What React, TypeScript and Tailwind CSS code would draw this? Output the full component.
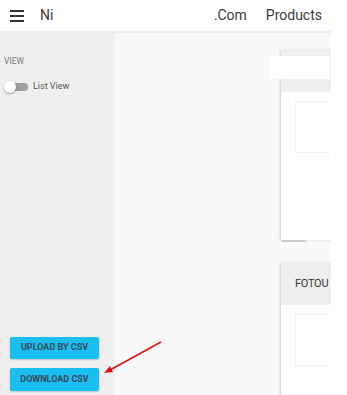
import React from 'react';

const font = { fontFamily: 'Roboto, "Liberation Sans", sans-serif' };

const Card: React.FC<{ title?: string; search?: boolean; bodyH: string }> = ({ title, search, bodyH }) => (
  <div className="relative w-[70px] bg-white shadow-[-1px_0_2px_rgba(0,0,0,0.18)]">
    <div className="h-[42px] bg-[#efefef] flex items-center pl-[14px]">
      {title && <span className="text-[11px] text-[#333] tracking-tight">{title}</span>}
    </div>
    {search && <div className="absolute left-[-10px] top-[6px] w-[59px] h-[23px] bg-white" />}
    <div className={`${bodyH} pt-[9px] pl-[14px]`}>
      <div className="w-[60px] h-[52px] border border-[#f2f2f2] border-r-0" />
    </div>
  </div>
);

const App: React.FC = () => {
  return (
    <div className="w-[347px] h-[395px] bg-white relative overflow-hidden" style={font}>
      <div className="w-[331px] h-full flex flex-col">
        <header className="h-[33px] shrink-0 flex items-center border-b-2 border-[#ececec] bg-white">
          <div className="ml-[10px] w-[14px] flex flex-col gap-[3px]">
            <span className="h-[2px] bg-[#333]" />
            <span className="h-[2px] bg-[#333]" />
            <span className="h-[2px] bg-[#333]" />
          </div>
          <span className="ml-[16px] text-[14px] text-[#3a3a3a]">Ni</span>
          <span className="ml-auto text-[14px] text-[#3a3a3a]">.Com</span>
          <span className="ml-[19px] mr-[9px] text-[14px] text-[#3a3a3a]">Products</span>
        </header>

        <div className="flex flex-1 min-h-0">
          <aside className="w-[115px] shrink-0 bg-[#efefef] flex flex-col justify-between pb-[4px]">
            <div className="pt-[22px] pl-[4px]">
              <div className="text-[8.5px] text-[#777]">VIEW</div>
              <div className="mt-[12px] flex items-center">
                <div className="relative w-[25px] h-[12px] flex items-center">
                  <div className="absolute left-[6px] w-[18px] h-[8px] rounded-full bg-[#9e9e9e]" />
                  <div className="relative w-[12px] h-[12px] rounded-full bg-white shadow-[0_1px_2px_rgba(0,0,0,0.35)]" />
                </div>
                <span className="ml-[4px] text-[9px] text-[#555]">List View</span>
              </div>
            </div>
            <div className="pl-[10px] flex flex-col gap-[9px]">
              <button className="w-[89px] h-[22px] rounded-[2px] bg-[#1bbef0] text-[9px] font-bold text-[#34495a] shadow-[0_1px_2px_rgba(0,0,0,0.2)]">
                UPLOAD BY CSV
              </button>
              <button className="w-[89px] h-[23px] rounded-[2px] bg-[#1bbef0] text-[9px] font-bold text-[#34495a] shadow-[0_1px_2px_rgba(0,0,0,0.2)]">
                DOWNLOAD CSV
              </button>
            </div>
          </aside>

          <main className="flex-1 bg-[#f9f9f9] pt-[17px] pl-[166px] flex flex-col gap-[23px] overflow-hidden">
            <div className="relative">
              <Card search bodyH="h-[148px]" />
              <div className="absolute left-[1px] bottom-[-2px] w-[24px] h-[2px] bg-[#c8c8c8]" />
            </div>
            <Card title="FOTOU" bodyH="h-[120px]" />
          </main>
        </div>
      </div>

      <svg className="absolute left-0 top-0 pointer-events-none" width="347" height="395">
        <line x1="161" y1="342" x2="110" y2="370" stroke="#e01010" strokeWidth="1.6" />
        <polygon points="104,373 110,366 113,372" fill="#e01010" />
      </svg>
    </div>
  );
};

export default App;
